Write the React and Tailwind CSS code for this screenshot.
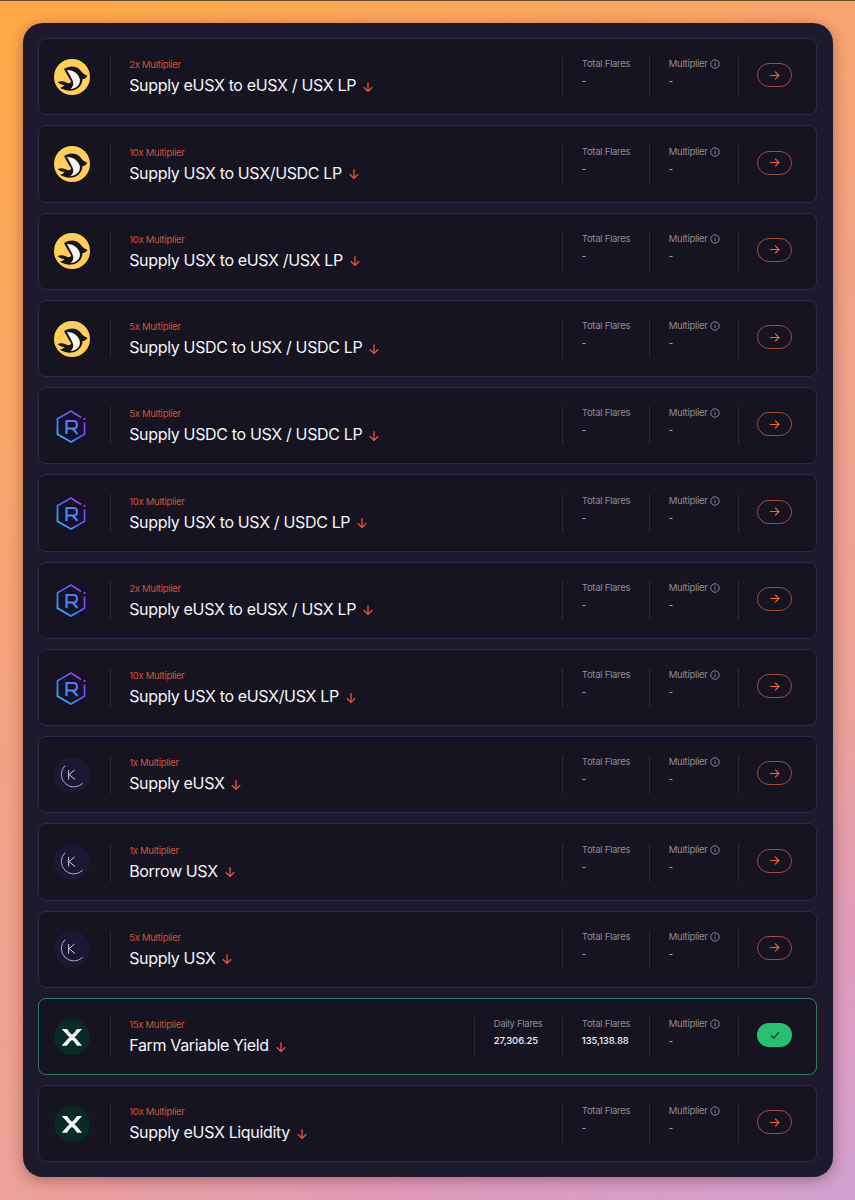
import React from "react";

const rows = [
  ["orca", "2x Multiplier", "Supply eUSX to eUSX / USX LP"],
  ["orca", "10x Multiplier", "Supply USX to USX/USDC LP"],
  ["orca", "10x Multiplier", "Supply USX to eUSX /USX LP"],
  ["orca", "5x Multiplier", "Supply USDC to USX / USDC LP"],
  ["ray", "5x Multiplier", "Supply USDC to USX / USDC LP"],
  ["ray", "10x Multiplier", "Supply USX to USX / USDC LP"],
  ["ray", "2x Multiplier", "Supply eUSX to eUSX / USX LP"],
  ["ray", "10x Multiplier", "Supply USX to eUSX/USX LP"],
  ["kamino", "1x Multiplier", "Supply eUSX"],
  ["kamino", "1x Multiplier", "Borrow USX"],
  ["kamino", "5x Multiplier", "Supply USX"],
  ["x", "15x Multiplier", "Farm Variable Yield", true],
  ["x", "10x Multiplier", "Supply eUSX Liquidity"],
];

function Orca() {
  return (
    <svg width="36" height="36" viewBox="0 0 36 36">
      <circle cx="18" cy="18" r="18" fill="#FFCF5A" />
      <path d="M10 10 C15 6.5 23 6.5 27 12 C28.5 14 30 15.5 33.5 17 C31.5 19.5 30 20 28.5 20 C28.5 25 25 30.5 18 31.5 C14 32 10 31 6 29 C8 28 9.5 27.5 10.5 26 C8 26 5.5 25 3.5 23 C6.5 22 9 22 11 23 C13.5 24.5 16 24.5 17 23 C17.5 21.5 15 20 14.5 18 C13 15.5 11.5 13 10 10 Z" fill="#17151c" />
      <path d="M13 11 C18.5 10.5 24.5 14.5 25.8 20 C26.8 25 23 29.8 16.5 30 C19.5 27.5 20 24.5 18.5 21.5 C17 18 15 14.5 13 11 Z" fill="#f7f5ee" />
      <path d="M11.5 21.5 C13 23 15 23 15.5 21.5" fill="none" stroke="#FFCF5A" strokeWidth="1" />
    </svg>
  );
}

function Ray({ id }) {
  const g = `ray-${id}`;
  const r = `rayr-${id}`;
  return (
    <svg width="36" height="36" viewBox="0 0 36 36">
      <circle cx="17.5" cy="18" r="18" fill="#15132a" />
      <defs>
        <linearGradient id={g} x1="0" y1="1" x2="1" y2="0">
          <stop offset="0" stopColor="#2fd0e8" />
          <stop offset="0.5" stopColor="#4a62e8" />
          <stop offset="1" stopColor="#c034dc" />
        </linearGradient>
        <linearGradient id={r} x1="0" y1="1" x2="1" y2="0">
          <stop offset="0" stopColor="#3a9cf0" />
          <stop offset="1" stopColor="#5f6cf2" />
        </linearGradient>
      </defs>
      <path d="M27 9.5 L17 3 L3.5 10.8 L3.5 26.2 L17 34 L30.5 26.2 L30.5 14.5" fill="none" stroke={`url(#${g})`} strokeWidth="1.7" />
      <circle cx="30.5" cy="11" r="1.1" fill="#d03ad0" />
      <path d="M12.5 26 V13 H20 C24 13 24 20.5 20 20.5 H13.5 M18.5 20.5 L23.5 26" fill="none" stroke={`url(#${r})`} strokeWidth="2.1" />
    </svg>
  );
}

function Kamino() {
  return (
    <svg width="36" height="36" viewBox="0 0 36 36">
      <circle cx="18" cy="18" r="18" fill="#1b1831" />
      <path d="M11 8.6 A11 11 0 1 0 28.6 26.3" fill="none" stroke="#a9a7ba" strokeWidth="1" />
      <path d="M14.6 13 V22.5 M20.6 13 L15 17.6 L21 22.5" fill="none" stroke="#c8c7d3" strokeWidth="1" />
    </svg>
  );
}

function XLogo() {
  return (
    <svg width="36" height="36" viewBox="0 0 36 36">
      <circle cx="18" cy="18" r="18" fill="#0a2a26" />
      <path d="M7.7 10 H13 C15 12.5 16.5 15 18 15.6 C19.5 15 21 12.5 23 10 H28 C25.5 13 22.5 16.5 20.5 18.3 C22.5 20 25.5 23.5 28 26.7 H23 C21 24 19.5 21.6 18 21 C16.5 21.6 15 24 13 26.7 H7.7 C10.5 23.5 13.5 20 15.5 18.3 C13.5 16.5 10.5 13 7.7 10 Z" fill="#f4f7f5" />
    </svg>
  );
}

function Logo({ kind, id }) {
  if (kind === "orca") return <Orca />;
  if (kind === "ray") return <Ray id={id} />;
  if (kind === "kamino") return <Kamino />;
  return <XLogo />;
}

function DownArrow() {
  return (
    <svg width="12" height="12" viewBox="0 0 12 12" fill="none" stroke="#E2583A" strokeWidth="1.3" className="ml-[6px] mt-[3px] shrink-0">
      <path d="M6 1.2 V10.4 M1.8 6.2 L6 10.4 L10.2 6.2" />
    </svg>
  );
}

function Stat({ label, value, info, strong, className }) {
  return (
    <div className={`flex h-[39px] flex-col border-l border-[#2c2838] pl-[18.5px] ${className}`}>
      <div className="flex h-[14px] items-center gap-[2px] text-[9.5px] leading-[14px] tracking-[-0.28px] text-[#8d8b96]">
        {label}
        {info && (
          <svg width="10" height="10" viewBox="0 0 10 10" fill="none" stroke="#a3a1ab" strokeWidth="0.8">
            <circle cx="5" cy="5" r="4.2" />
            <path d="M5 4.4 V7.2 M5 2.7 V3.5" />
          </svg>
        )}
      </div>
      <div className={`mt-[3px] text-[9.5px] leading-[14px] tracking-[-0.1px] ${strong ? "font-medium text-[#f4f3f6]" : "text-[#b9b8bf]"}`}>{value}</div>
    </div>
  );
}

function Row({ kind, mult, title, done, id }) {
  return (
    <div className={`flex h-[77.25px] shrink-0 items-center rounded-[8px] border bg-[#171422] pl-[15px] pr-[24px] ${done ? "border-[#2f7a5e]" : "border-[#2e2747]"}`}>
      <div className="h-9 w-9 shrink-0"><Logo kind={kind} id={id} /></div>
      <div className="ml-[20px] flex h-[39px] min-w-0 flex-1 flex-col border-l border-[#2c2838] pl-[18px]">
        <div className="mt-[1px] text-[9.5px] leading-[14px] tracking-[-0.28px] text-[#C9543A]">{mult}</div>
        <div className="mt-[2px] flex items-center text-[16px] leading-[22px] tracking-[-0.34px] text-[#f5f4f7]">
          {title}
          <DownArrow />
        </div>
      </div>
      {done && <Stat className="w-[88px] shrink-0" label="Daily Flares" value="27,306.25" strong />}
      <Stat className="w-[87px] shrink-0" label="Total Flares" value={done ? "135,138.88" : "-"} strong={done} />
      <Stat className="w-[89px] shrink-0" label="Multiplier" value="-" info />
      <div className="flex h-[39px] shrink-0 items-center border-l border-[#2c2838] pb-[3px] pl-[18px]">
        {done ? (
          <div className="flex h-[24px] w-[35px] items-center justify-center rounded-full bg-[#27BF72]">
            <svg width="12" height="12" viewBox="0 0 12 12" fill="none" stroke="#1b3a2c" strokeWidth="1.2">
              <path d="M2 6.5 L4.8 9.2 L10 3" />
            </svg>
          </div>
        ) : (
          <div className="flex h-[24px] w-[35px] items-center justify-center rounded-full border border-[#A64A35]">
            <svg width="11" height="11" viewBox="0 0 12 12" fill="none" stroke="#F0603A" strokeWidth="1.3">
              <path d="M1 6 H10.6 M6.6 1.8 L10.8 6 L6.6 10.2" />
            </svg>
          </div>
        )}
      </div>
    </div>
  );
}

export default function App() {
  return (
    <div
      className="h-[1200px] w-[855px] overflow-hidden bg-[linear-gradient(150deg,#FFA945_0%,#F7A56C_29%,#F1A182_45%,#EDA097_70%,#DF9ABC_85%,#CFA2D0_100%)]"
      style={{ fontFamily: "Inter, 'Liberation Sans', sans-serif" }}
    >
      <div className="h-px bg-[#6b5030]" />
      <div className="px-[22.5px] pt-[21.5px]">
        <div className="flex h-[1154.5px] w-[810.5px] flex-col gap-[10px] rounded-[20px] bg-[#1e1a2d] p-[15.7px] shadow-[0_3px_14px_rgba(70,30,30,0.4)]">
          {rows.map((r, i) => (
            <Row key={i} id={i} kind={r[0]} mult={r[1]} title={r[2]} done={r[3]} />
          ))}
        </div>
      </div>
    </div>
  );
}
